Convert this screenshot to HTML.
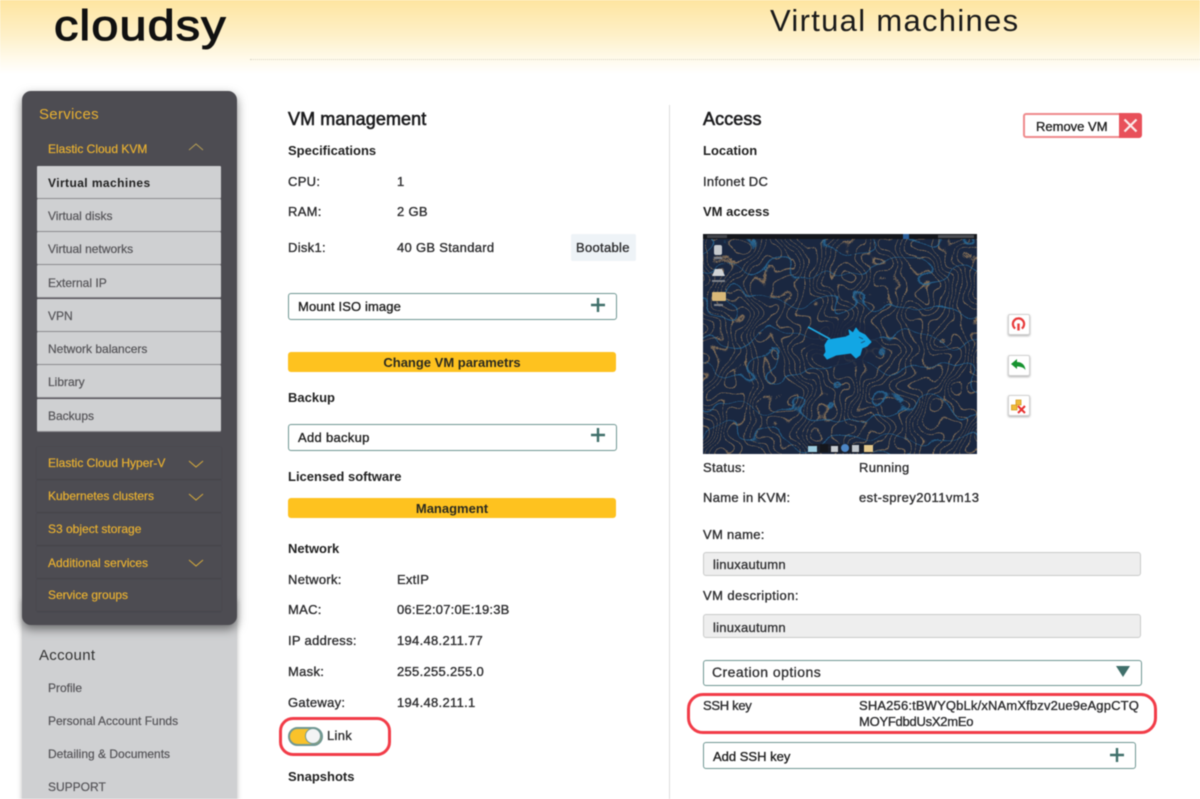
<!DOCTYPE html>
<html><head><meta charset="utf-8"><style>
html,body{margin:0;padding:0;background:#fff}
#p{position:relative;width:1200px;height:799px;overflow:hidden;background:#fff;font-family:"Liberation Sans",sans-serif;font-size:13px;color:#2e2e30;filter:blur(.4px)}
.t{position:absolute;white-space:nowrap;line-height:16px;letter-spacing:.3px;margin-top:1px}
.b{font-weight:bold;color:#222;letter-spacing:0}
.m{-webkit-text-stroke:.35px currentColor}
.h{font-size:18px;line-height:22px;color:#1c1c1e;letter-spacing:.1px;-webkit-text-stroke:.6px #1c1c1e;margin-top:0}
.y{color:#e8b031;letter-spacing:0;font-size:12px;-webkit-text-stroke:.2px #e8b031}
.g{color:#555458;letter-spacing:0;font-size:12px;-webkit-text-stroke:.2px #555458}
.i{position:absolute;left:37px;width:184px;height:32px;background:#cfd0d2;border-radius:1px;box-shadow:0 1px 0 #8c8c90}
.d{position:absolute;left:37px;width:184px;height:32px;box-shadow:0 1px 1px #46454b,0 0 1px #47464c}
.box{position:absolute;box-sizing:border-box;border:1.6px solid #6f9793;border-radius:3px;background:#fff}
.yb{position:absolute;left:288px;width:328px;height:20px;background:#fec21f;border-radius:3px;text-align:center;line-height:22px;font-weight:bold;color:#2a2a20;letter-spacing:0}
.pl{position:absolute;width:14px;height:14px}
.inp{position:absolute;left:703px;width:438px;height:24px;box-sizing:border-box;background:#eeeeee;border:1px solid #c9cbca;border-radius:3px;line-height:24px;padding-left:9px;letter-spacing:.25px;-webkit-text-stroke:.3px #2e2e30}
.ov{position:absolute;box-sizing:border-box;border:3.5px solid #f23c48;background:transparent}
.ic{position:absolute;left:1008px;width:20px;height:19px;background:#fff;border:1px solid #d2d2d2;border-radius:2px;box-shadow:0 1px 2px #aaa}
svg{position:absolute;display:block}
</style></head><body><div id="p">

<div style="position:absolute;left:0;top:0;width:1200px;height:74px;background:linear-gradient(#fee5a0 0,#fef0c8 35px,#fffaea 58px,#fff 74px)"></div>
<div style="position:absolute;left:250px;top:59px;width:950px;border-top:1px dotted #d8d4c4"></div>
<div class="t" style="left:54px;top:-1px;font-size:43px;line-height:54px;color:#111;letter-spacing:1px;-webkit-text-stroke:1.1px #111;transform:scaleX(1.13);transform-origin:0 0;margin-top:0">cloudsy</div>
<div class="t" style="left:770px;top:3px;font-size:31px;line-height:36px;color:#1a1a1a;letter-spacing:1.3px;margin-top:0">Virtual machines</div>

<!-- sidebar -->
<div style="position:absolute;left:22px;top:600px;width:215px;height:210px;background:#cfd0d2;box-shadow:0 0 5px #bbb"></div>
<div style="position:absolute;left:22px;top:91px;width:215px;height:534px;background:#4d4c52;border-radius:9px;box-shadow:0 4px 10px rgba(0,0,0,.5)"></div>
<div class="t" style="left:39px;top:105px;font-size:15px;line-height:18px;color:#e8b031;letter-spacing:.3px">Services</div>
<div class="t y" style="left:48px;top:140px">Elastic Cloud KVM</div>
<svg style="left:188px;top:142px" width="16" height="10"><path d="M1 8L8 2L15 8" fill="none" stroke="#b09a55" stroke-width="1.1"/></svg>

<div class="i" style="top:166px"></div><div class="i" style="top:199px"></div><div class="i" style="top:232px"></div><div class="i" style="top:265px"></div><div class="i" style="top:299px"></div><div class="i" style="top:332px"></div><div class="i" style="top:365px"></div><div class="i" style="top:399px"></div>
<div class="t b" style="left:48px;top:174px;letter-spacing:.42px;font-size:12px">Virtual machines</div>
<div class="t g" style="left:48px;top:207px">Virtual disks</div>
<div class="t g" style="left:48px;top:240px">Virtual networks</div>
<div class="t g" style="left:48px;top:274px">External IP</div>
<div class="t g" style="left:48px;top:307px">VPN</div>
<div class="t g" style="left:48px;top:340px">Network balancers</div>
<div class="t g" style="left:48px;top:373px">Library</div>
<div class="t g" style="left:48px;top:407px">Backups</div>

<div class="d" style="top:447px"></div><div class="d" style="top:480px"></div><div class="d" style="top:513px"></div><div class="d" style="top:546px"></div><div class="d" style="top:579px"></div>
<div class="t y" style="left:48px;top:454px">Elastic Cloud Hyper-V</div>
<div class="t y" style="left:48px;top:487px">Kubernetes clusters</div>
<div class="t y" style="left:48px;top:520px">S3 object storage</div>
<div class="t y" style="left:48px;top:554px">Additional services</div>
<div class="t y" style="left:48px;top:586px">Service groups</div>
<svg style="left:188px;top:459px" width="16" height="10"><path d="M1 2L8 8L15 2" fill="none" stroke="#cfa63e" stroke-width="1.1"/></svg>
<svg style="left:188px;top:492px" width="16" height="10"><path d="M1 2L8 8L15 2" fill="none" stroke="#cfa63e" stroke-width="1.1"/></svg>
<svg style="left:188px;top:558px" width="16" height="10"><path d="M1 2L8 8L15 2" fill="none" stroke="#cfa63e" stroke-width="1.1"/></svg>

<div class="t" style="left:39px;top:646px;font-size:15px;line-height:18px;color:#333;letter-spacing:.3px">Account</div>
<div class="t g" style="left:48px;top:679px">Profile</div>
<div class="t g" style="left:48px;top:712px">Personal Account Funds</div>
<div class="t g" style="left:48px;top:745px">Detailing &amp; Documents</div>
<div class="t g" style="left:48px;top:778px">SUPPORT</div>

<!-- left col -->
<div class="t h" style="left:288px;top:108px">VM management</div>
<div class="t b" style="left:288px;top:142px">Specifications</div>
<div class="t m" style="left:288px;top:173px">CPU:</div><div class="t m" style="left:397px;top:173px">1</div>
<div class="t m" style="left:288px;top:203px">RAM:</div><div class="t m" style="left:397px;top:203px">2 GB</div>
<div class="t m" style="left:288px;top:239px">Disk1:</div><div class="t m" style="left:397px;top:239px">40 GB Standard</div>
<div style="position:absolute;left:571px;top:234px;width:65px;height:27px;background:#eef3f7;border-radius:2px"></div>
<div class="t m" style="left:576px;top:239px">Bootable</div>

<div class="box" style="left:288px;top:293px;width:329px;height:27px"></div>
<div class="t m" style="left:298px;top:298px;color:#222;letter-spacing:.12px">Mount ISO image</div>
<svg class="pl" style="left:591px;top:298px"><path d="M7 0V14M0 7H14" stroke="#3f6f6a" stroke-width="2.4"/></svg>
<div class="yb" style="top:352px">Change VM parametrs</div>
<div class="t b" style="left:288px;top:389px">Backup</div>
<div class="box" style="left:288px;top:424px;width:329px;height:27px"></div>
<div class="t m" style="left:298px;top:429px;color:#222">Add backup</div>
<svg class="pl" style="left:591px;top:428px"><path d="M7 0V14M0 7H14" stroke="#3f6f6a" stroke-width="2.4"/></svg>
<div class="t b" style="left:288px;top:468px">Licensed software</div>
<div class="yb" style="top:498px">Managment</div>
<div class="t b" style="left:288px;top:540px">Network</div>
<div class="t m" style="left:288px;top:571px">Network:</div><div class="t m" style="left:397px;top:571px;letter-spacing:.2px">ExtIP</div>
<div class="t m" style="left:288px;top:601px">MAC:</div><div class="t m" style="left:397px;top:601px;letter-spacing:.2px">06:E2:07:0E:19:3B</div>
<div class="t m" style="left:288px;top:632px">IP address:</div><div class="t m" style="left:397px;top:632px">194.48.211.77</div>
<div class="t m" style="left:288px;top:663px">Mask:</div><div class="t m" style="left:397px;top:663px">255.255.255.0</div>
<div class="t m" style="left:288px;top:694px">Gateway:</div><div class="t m" style="left:397px;top:694px">194.48.211.1</div>

<div class="ov" style="left:279px;top:717px;width:112px;height:39px;border-radius:14px"></div>
<div style="position:absolute;left:288px;top:727px;width:35px;height:19px;box-sizing:border-box;background:#f9c22a;border:2px solid #6f9793;border-radius:10px"></div>
<div style="position:absolute;left:305px;top:728px;width:14px;height:14px;background:#f3f4f4;border:1.5px solid #6f9793;border-radius:50%"></div>
<div class="t m" style="left:327px;top:727px">Link</div>
<div class="t b" style="left:288px;top:768px">Snapshots</div>

<div style="position:absolute;left:669px;top:105px;width:1px;height:694px;background:#dcdcdc"></div>

<!-- right col -->
<div class="t h" style="left:703px;top:108px">Access</div>
<div class="t b" style="left:703px;top:142px">Location</div>
<div class="t m" style="left:703px;top:173px">Infonet DC</div>
<div class="t b" style="left:703px;top:203px">VM access</div>

<div style="position:absolute;left:1023px;top:113px;width:118px;height:25px;box-sizing:border-box;border:2px solid #ef8a8c;border-radius:3px;background:#fff"></div>
<div class="t m" style="left:1036px;top:118px;color:#222;letter-spacing:0">Remove VM</div>
<div style="position:absolute;left:1119px;top:113px;width:23px;height:25px;background:#e8505a;border-radius:0 3px 3px 0"></div>
<svg style="left:1123px;top:118px" width="15" height="15"><path d="M1.5 1.5L13.5 13.5M13.5 1.5L1.5 13.5" stroke="#fbeaea" stroke-width="2.2"/></svg>

<!-- desktop screenshot -->
<svg style="left:703px;top:234px" width="274" height="220" viewBox="0 0 274 220">
<defs>
<pattern id="ps1" width="10" height="10" patternUnits="userSpaceOnUse"><rect x="0" y="0" width="1.1" height="10" fill="#a8875f"/></pattern>
<pattern id="ps2" width="300" height="34" patternUnits="userSpaceOnUse"><rect x="0" y="0" width="300" height="1.2" fill="#2a6f9e"/></pattern>
<filter id="w1" filterUnits="userSpaceOnUse" x="-60" y="-60" width="394" height="340" color-interpolation-filters="sRGB">
<feTurbulence type="fractalNoise" baseFrequency=".028" numOctaves="2" seed="11" result="n"/>
<feDisplacementMap in="SourceGraphic" in2="n" scale="90" xChannelSelector="R" yChannelSelector="G"/>
</filter>
<filter id="w2" filterUnits="userSpaceOnUse" x="-60" y="-60" width="394" height="340" color-interpolation-filters="sRGB">
<feTurbulence type="fractalNoise" baseFrequency=".024" numOctaves="2" seed="31" result="n"/>
<feDisplacementMap in="SourceGraphic" in2="n" scale="80" xChannelSelector="R" yChannelSelector="G"/>
</filter>
</defs>
<rect width="274" height="220" fill="#1a2740"/>
<rect x="-60" y="-60" width="394" height="340" fill="url(#ps1)" filter="url(#w1)" opacity=".7"/>
<rect x="-60" y="-60" width="394" height="340" fill="url(#ps2)" filter="url(#w2)" opacity=".8"/>
<ellipse cx="140" cy="110" rx="38" ry="24" fill="#1a2740" opacity=".8"/>
<rect width="274" height="5" fill="#15171c"/>
<rect x="200" y="0" width="6" height="5" fill="#2b5f9a"/>
<rect x="235" y="1" width="36" height="3" fill="#6e7076" opacity=".6"/>
<rect x="4" y="1" width="20" height="3" fill="#6e7076" opacity=".5"/>
<rect x="11" y="11" width="8" height="10" rx="2" fill="#c5c9cd"/>
<rect x="11" y="23" width="8" height="2" fill="#7c818a"/>
<path d="M9 42L12 35H19L22 42Z" fill="#d0d3d6"/>
<rect x="9" y="46" width="13" height="2" fill="#7c818a"/>
<rect x="9" y="58" width="14" height="9" rx="1" fill="#d8b878"/>
<rect x="11" y="70" width="9" height="2" fill="#7c818a"/>
<path d="M105 93L127 105" stroke="#1ea8e0" stroke-width="1.6" fill="none"/>
<path d="M125 106L143 103L147 101L146 96L150 99L153 94L156 98L162 101L168 108L164 112L159 114L157 121L153 124L148 119L133 121L124 125L121 121L123 118L122 111Z" fill="#12a6e4" stroke="#12a6e4" stroke-linejoin="round"/>
<path d="M156 103L160 105M158 109L162 107" stroke="#1a5f88" stroke-width="1" fill="none"/>
<rect x="105" y="210" width="65" height="9" fill="#1a1e28" opacity=".9"/>
<rect x="105" y="212" width="9" height="6" fill="#9ccde0"/>
<rect x="117" y="210" width="8" height="8" fill="#15171c"/>
<rect x="128" y="212" width="7" height="6" fill="#c8ccd0"/>
<circle cx="142" cy="214" r="4" fill="#4d86c6"/>
<rect x="149" y="211" width="7" height="7" fill="#c0c6cc"/>
<rect x="161" y="211" width="9" height="7" fill="#e6c98c"/>
</svg>

<div class="ic" style="top:314px"></div>
<svg style="left:1011px;top:317px" width="15" height="15"><path d="M4.2 11.5A5.6 5.6 0 1 1 10.8 11.5" fill="none" stroke="#e83a3a" stroke-width="2.2"/><path d="M7.5 6.5V13.5" stroke="#e83a3a" stroke-width="2.4"/></svg>
<div class="ic" style="top:355px"></div>
<svg style="left:1010px;top:358px" width="17" height="14"><path d="M1 6L7 1V4C12 4 15 7 15.5 12C13.5 9.5 11 8.5 7 8.5V11Z" fill="#16932f"/></svg>
<div class="ic" style="top:395px"></div>
<svg style="left:1010px;top:398px" width="17" height="16"><path d="M6 2H11V7H6ZM1.5 7H7V12H1.5Z" fill="#efbb3a" stroke="#d69a1c" stroke-width=".8"/><path d="M8 8L15 15M15 8L8 15" stroke="#e8302e" stroke-width="2"/></svg>

<div class="t m" style="left:703px;top:459px">Status:</div><div class="t m" style="left:859px;top:459px">Running</div>
<div class="t m" style="left:703px;top:489px">Name in KVM:</div><div class="t m" style="left:859px;top:489px;letter-spacing:.42px">est-sprey2011vm13</div>
<div class="t m" style="left:703px;top:526px">VM name:</div>
<div class="inp" style="top:552px">linuxautumn</div>
<div class="t m" style="left:703px;top:587px;letter-spacing:.42px">VM description:</div>
<div class="inp" style="top:614px;line-height:25px">linuxautumn</div>

<div class="box" style="left:703px;top:660px;width:439px;height:26px"></div>
<div class="t" style="left:712px;top:663px;font-size:14px;letter-spacing:.45px;-webkit-text-stroke:.3px #2e2e30">Creation options</div>
<svg style="left:1116px;top:666px" width="14" height="12"><path d="M0 0H14L7 11Z" fill="#3f6f6a"/></svg>

<div class="ov" style="left:687px;top:693px;width:470px;height:41px;border-radius:16px"></div>
<div class="t m" style="left:703px;top:697px;letter-spacing:-.3px">SSH key</div>
<div class="t m" style="left:859px;top:697px;letter-spacing:.15px">SHA256:tBWYQbLk/xNAmXfbzv2ue9eAgpCTQ</div>
<div class="t m" style="left:859px;top:713px;letter-spacing:-.25px">MOYFdbdUsX2mEo</div>

<div class="box" style="left:703px;top:742px;width:433px;height:27px"></div>
<div class="t m" style="left:713px;top:748px;color:#222;letter-spacing:0">Add SSH key</div>
<svg class="pl" style="left:1110px;top:748px"><path d="M7 0V14M0 7H14" stroke="#3f6f6a" stroke-width="2.4"/></svg>

</div></body></html>
